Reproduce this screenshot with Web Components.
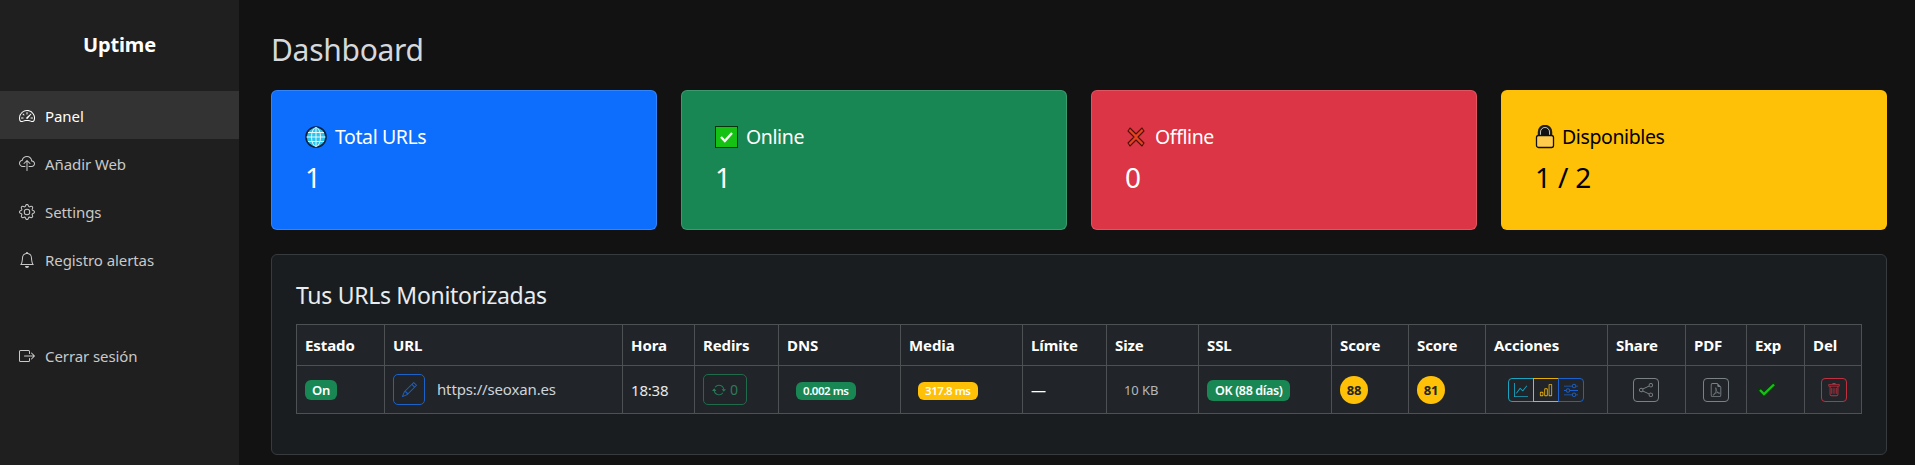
<!DOCTYPE html>
<html lang="es"><head><meta charset="utf-8"><title>Uptime</title>
<style>
html,body{margin:0;height:100%;background:#121212;overflow:hidden}
body{font-family:"Noto Sans","Liberation Sans",sans-serif;color:#fff}
</style></head><body>
<x-app></x-app>
<script>
const P={
speed:'<path d="M8 4a.5.5 0 0 1 .5.5V6a.5.5 0 0 1-1 0V4.5A.5.5 0 0 1 8 4zM3.732 5.732a.5.5 0 0 1 .707 0l.915.914a.5.5 0 1 1-.708.708l-.914-.915a.5.5 0 0 1 0-.707zM2 10a.5.5 0 0 1 .5-.5h1.586a.5.5 0 0 1 0 1H2.5A.5.5 0 0 1 2 10zm9.5 0a.5.5 0 0 1 .5-.5h1.5a.5.5 0 0 1 0 1H12a.5.5 0 0 1-.5-.5zm.754-4.246a.389.389 0 0 0-.527-.02L7.547 9.31a.91.91 0 1 0 1.302 1.258l3.434-4.297a.389.389 0 0 0-.029-.518z"/><path fill-rule="evenodd" d="M0 10a8 8 0 1 1 15.547 2.661c-.442 1.253-1.845 1.602-2.932 1.25C11.309 13.488 9.475 13 8 13c-1.474 0-3.31.488-4.615.911-1.087.352-2.49.003-2.932-1.25A7.988 7.988 0 0 1 0 10zm8-7a7 7 0 0 0-6.603 9.329c.203.575.923.876 1.68.63C4.397 12.533 6.358 12 8 12s3.604.532 4.923.96c.757.245 1.477-.056 1.68-.631A7 7 0 0 0 8 3z"/>',
cloud:'<path fill-rule="evenodd" d="M4.406 1.342A5.53 5.53 0 0 1 8 0c2.69 0 4.923 2 5.166 4.579C14.758 4.804 16 6.137 16 7.773 16 9.569 14.502 11 12.687 11H10a.5.5 0 0 1 0-1h2.688C13.979 10 15 8.988 15 7.773c0-1.216-1.02-2.228-2.313-2.228h-.5v-.5C12.188 2.825 10.328 1 8 1a4.53 4.53 0 0 0-2.941 1.1c-.757.652-1.153 1.438-1.153 2.055v.448l-.445.049C2.064 4.805 1 5.952 1 7.318 1 8.785 2.23 10 3.781 10H6a.5.5 0 0 1 0 1H3.781C1.708 11 0 9.366 0 7.318c0-1.763 1.266-3.223 2.942-3.593.143-.863.698-1.723 1.464-2.383z"/><path fill-rule="evenodd" d="M7.646 4.146a.5.5 0 0 1 .708 0l3 3a.5.5 0 0 1-.708.708L8.5 5.707V14.5a.5.5 0 0 1-1 0V5.707L5.354 7.854a.5.5 0 1 1-.708-.708l3-3z"/>',
gear:'<path d="M8 4.754a3.246 3.246 0 1 0 0 6.492 3.246 3.246 0 0 0 0-6.492zM5.754 8a2.246 2.246 0 1 1 4.492 0 2.246 2.246 0 0 1-4.492 0z"/><path d="M9.796 1.343c-.527-1.79-3.065-1.79-3.592 0l-.094.319a.873.873 0 0 1-1.255.52l-.292-.16c-1.64-.892-3.433.902-2.54 2.541l.159.292a.873.873 0 0 1-.52 1.255l-.319.094c-1.79.527-1.79 3.065 0 3.592l.319.094a.873.873 0 0 1 .52 1.255l-.16.292c-.892 1.64.901 3.434 2.541 2.54l.292-.159a.873.873 0 0 1 1.255.52l.094.319c.527 1.79 3.065 1.79 3.592 0l.094-.319a.873.873 0 0 1 1.255-.52l.292.16c1.64.893 3.434-.902 2.54-2.541l-.159-.292a.873.873 0 0 1 .52-1.255l.319-.094c1.79-.527 1.79-3.065 0-3.592l-.319-.094a.873.873 0 0 1-.52-1.255l.16-.292c.893-1.64-.902-3.433-2.541-2.54l-.292.159a.873.873 0 0 1-1.255-.52l-.094-.319zm-2.633.283c.246-.835 1.428-.835 1.674 0l.094.319a1.873 1.873 0 0 0 2.693 1.115l.291-.16c.764-.415 1.6.42 1.184 1.185l-.159.292a1.873 1.873 0 0 0 1.116 2.692l.318.094c.835.246.835 1.428 0 1.674l-.319.094a1.873 1.873 0 0 0-1.115 2.693l.16.291c.415.764-.42 1.6-1.185 1.184l-.291-.159a1.873 1.873 0 0 0-2.693 1.116l-.094.318c-.246.835-1.428.835-1.674 0l-.094-.319a1.873 1.873 0 0 0-2.692-1.115l-.292.16c-.764.415-1.6-.42-1.184-1.185l.159-.291A1.873 1.873 0 0 0 1.945 8.93l-.319-.094c-.835-.246-.835-1.428 0-1.674l.319-.094A1.873 1.873 0 0 0 3.06 4.377l-.16-.292c-.415-.764.42-1.6 1.185-1.184l.292.159a1.873 1.873 0 0 0 2.692-1.115l.094-.319z"/>',
bell:'<path d="M8 16a2 2 0 0 0 2-2H6a2 2 0 0 0 2 2zM8 1.918l-.797.161A4.002 4.002 0 0 0 4 6c0 .628-.134 2.197-.459 3.742-.16.767-.376 1.566-.663 2.258h10.244c-.287-.692-.502-1.49-.663-2.258C12.134 8.197 12 6.628 12 6a4.002 4.002 0 0 0-3.203-3.92L8 1.917zM14.22 12c.223.447.481.801.78 1H1c.299-.199.557-.553.78-1C2.68 10.2 3 6.88 3 6c0-2.42 1.72-4.44 4.005-4.901a1 1 0 1 1 1.99 0A5.002 5.002 0 0 1 13 6c0 .88.32 4.2 1.22 6z"/>',
logout:'<path fill-rule="evenodd" d="M10 12.5a.5.5 0 0 1-.5.5h-8a.5.5 0 0 1-.5-.5v-9a.5.5 0 0 1 .5-.5h8a.5.5 0 0 1 .5.5v2a.5.5 0 0 0 1 0v-2A1.5 1.5 0 0 0 9.5 2h-8A1.5 1.5 0 0 0 0 3.5v9A1.5 1.5 0 0 0 1.5 14h8a1.5 1.5 0 0 0 1.5-1.5v-2a.5.5 0 0 0-1 0v2z"/><path fill-rule="evenodd" d="M15.854 8.354a.5.5 0 0 0 0-.708l-3-3a.5.5 0 0 0-.708.708L14.293 7.5H5.5a.5.5 0 0 0 0 1h8.793l-2.147 2.146a.5.5 0 0 0 .708.708l3-3z"/>',
pencil:'<path d="M12.146.146a.5.5 0 0 1 .708 0l3 3a.5.5 0 0 1 0 .708l-10 10a.5.5 0 0 1-.168.11l-5 2a.5.5 0 0 1-.65-.65l2-5a.5.5 0 0 1 .11-.168l10-10zM11.207 2.5 13.5 4.793 14.793 3.5 12.5 1.207 11.207 2.5zm1.586 3L10.5 3.207 4 9.707V10h.5a.5.5 0 0 1 .5.5v.5h.5a.5.5 0 0 1 .5.5v.5h.293l6.5-6.5zm-9.761 5.175-.106.106-1.528 3.821 3.821-1.528.106-.106A.5.5 0 0 1 5 12.5V12h-.5a.5.5 0 0 1-.5-.5V11h-.5a.5.5 0 0 1-.468-.325z"/>',
repeat:'<path d="M11.534 7h3.932a.25.25 0 0 1 .192.41l-1.966 2.36a.25.25 0 0 1-.384 0l-1.966-2.36a.25.25 0 0 1 .192-.41zm-11 2h3.932a.25.25 0 0 0 .192-.41L2.692 6.23a.25.25 0 0 0-.384 0L.342 8.59A.25.25 0 0 0 .534 9z"/><path fill-rule="evenodd" d="M8 3c-1.552 0-2.94.707-3.857 1.818a.5.5 0 1 1-.771-.636A6.002 6.002 0 0 1 13.917 7H12.9A5.002 5.002 0 0 0 8 3zM3.1 9a5.002 5.002 0 0 0 8.757 2.182.5.5 0 1 1 .771.636A6.002 6.002 0 0 1 2.083 9H3.1z"/>',
graph:'<path fill-rule="evenodd" d="M0 0h1v15h15v1H0V0Zm14.817 3.113a.5.5 0 0 1 .07.704l-4.5 5.5a.5.5 0 0 1-.74.037L7.06 6.767l-3.656 5.027a.5.5 0 0 1-.808-.588l4-5.5a.5.5 0 0 1 .758-.06l2.609 2.61 4.15-5.073a.5.5 0 0 1 .704-.07Z"/>',
bars:'<path d="M4 11H2v3h2v-3zm5-4H7v7h2V7zm5-5v12h-2V2h2zm-2-1a1 1 0 0 0-1 1v12a1 1 0 0 0 1 1h2a1 1 0 0 0 1-1V2a1 1 0 0 0-1-1h-2zM6 7a1 1 0 0 1 1-1h2a1 1 0 0 1 1 1v7a1 1 0 0 1-1 1H7a1 1 0 0 1-1-1V7zm-5 4a1 1 0 0 1 1-1h2a1 1 0 0 1 1 1v3a1 1 0 0 1-1 1H2a1 1 0 0 1-1-1v-3z"/>',
sliders:'<path fill-rule="evenodd" d="M11.5 2a1.5 1.5 0 1 0 0 3 1.5 1.5 0 0 0 0-3zM9.05 3a2.5 2.5 0 0 1 4.9 0H16v1h-2.05a2.5 2.5 0 0 1-4.9 0H0V3h9.05zM4.5 7a1.5 1.5 0 1 0 0 3 1.5 1.5 0 0 0 0-3zM2.05 8a2.5 2.5 0 0 1 4.9 0H16v1H6.95a2.5 2.5 0 0 1-4.9 0H0V8h2.05zm9.45 4a1.5 1.5 0 1 0 0 3 1.5 1.5 0 0 0 0-3zm-2.45 1a2.5 2.5 0 0 1 4.9 0H16v1h-2.05a2.5 2.5 0 0 1-4.9 0H0v-1h9.05z"/>',
share:'<path d="M13.5 1a1.5 1.5 0 1 0 0 3 1.5 1.5 0 0 0 0-3zM11 2.5a2.5 2.5 0 1 1 .603 1.628l-6.718 3.12a2.499 2.499 0 0 1 0 1.504l6.718 3.12a2.5 2.5 0 1 1-.488.876l-6.718-3.12a2.5 2.5 0 1 1 0-3.256l6.718-3.12A2.5 2.5 0 0 1 11 2.5zm-8.5 4a1.5 1.5 0 1 0 0 3 1.5 1.5 0 0 0 0-3zm11 5.5a1.5 1.5 0 1 0 0 3 1.5 1.5 0 0 0 0-3z"/>',
pdf:'<path d="M14 14V4.5L9.5 0H4a2 2 0 0 0-2 2v12a2 2 0 0 0 2 2h8a2 2 0 0 0 2-2zM9.5 3A1.5 1.5 0 0 0 11 4.5h2V14a1 1 0 0 1-1 1H4a1 1 0 0 1-1-1V2a1 1 0 0 1 1-1h5.5v2z"/><path fill="none" stroke="currentColor" stroke-width=".8" d="M8 5.5c-.5 0-.6 1.600 1.900 5.500.8 1.100 2.300 1.500 2.400.6.100-.9-2.600-1-5 0-2 .8-3 2-2.400 2.500.7.500 3.900-4.700 3.100-8.100-.1-.4-.3-.5-.5-.5z"/>',
trash:'<path d="M5.500 5.500A.5.5 0 0 1 6 6v6a.5.5 0 0 1-1 0V6a.5.5 0 0 1 .5-.5zm2.500 0a.5.5 0 0 1 .5.5v6a.5.5 0 0 1-1 0V6a.5.5 0 0 1 .5-.5zm3 .5a.5.5 0 0 0-1 0v6a.5.5 0 0 0 1 0V6z"/><path fill-rule="evenodd" d="M14.500 3a1 1 0 0 1-1 1H13v9a2 2 0 0 1-2 2H5a2 2 0 0 1-2-2V4h-.5a1 1 0 0 1-1-1V2a1 1 0 0 1 1-1H6a1 1 0 0 1 1-1h2a1 1 0 0 1 1 1h3.500a1 1 0 0 1 1 1v1zM4.118 4 4 4.059V13a1 1 0 0 0 1 1h6a1 1 0 0 0 1-1V4.059L11.882 4H4.118zM2.500 3V2h11v1h-11z"/>'
};
function def(name,css,html,attrsFn){
  customElements.define(name,class extends HTMLElement{
    connectedCallback(){
      if(this.shadowRoot)return;
      const s=this.attachShadow({mode:'open'});
      s.innerHTML='<style>'+css+'</style>'+(attrsFn?attrsFn(this):html);
    }
  });
}
def('x-icon',':host{display:inline-flex;color:inherit;line-height:0}svg{display:block;fill:currentColor}','',e=>{
  const z=e.getAttribute('size')||16;
  return `<svg xmlns="http://www.w3.org/2000/svg" width="${z}" height="${z}" viewBox="0 0 16 16">${P[e.getAttribute('name')]}</svg>`;
});
def('x-nav-item',`:host{display:flex;align-items:center;gap:10px;height:48px;box-sizing:border-box;padding:1px 0 0 19px;color:#c9c9c9;font-size:15px;letter-spacing:-.08px}
:host([active]){background:#333;color:#fff}`,'<slot name="icon"></slot><span><slot></slot></span>');
def('x-sidebar',`:host{display:flex;flex-direction:column;width:239px;flex:none;height:100vh;background:#1f1f1f;box-sizing:border-box}
.brand{height:91px;display:flex;align-items:center;justify-content:center;padding-bottom:2px;box-sizing:border-box;font-size:20px;font-weight:700;color:#fff;letter-spacing:-.15px}
.gap{height:48px}`,`<div class="brand">Uptime</div>
<x-nav-item active><x-icon slot="icon" name="speed"></x-icon>Panel</x-nav-item>
<x-nav-item><x-icon slot="icon" name="cloud"></x-icon>Añadir Web</x-nav-item>
<x-nav-item><x-icon slot="icon" name="gear"></x-icon>Settings</x-nav-item>
<x-nav-item><x-icon slot="icon" name="bell"></x-icon>Registro alertas</x-nav-item>
<div class="gap"></div>
<x-nav-item><x-icon slot="icon" name="logout"></x-icon>Cerrar sesión</x-nav-item>`);
def('x-stat-card',`:host{display:block;height:140px;box-sizing:border-box;border-radius:6px;border:1px solid rgba(255,255,255,.16);padding:31px 33px;background:var(--bg);color:var(--fg,#fff)}
:host([dark]){border-color:transparent}
.t{display:flex;align-items:center;gap:8px;font-size:19.500px;line-height:30px;height:30px;letter-spacing:-.4px}
.v{font-size:28px;line-height:42px;margin-top:4px;letter-spacing:-.2px}`,
`<div class="t"><slot name="icon"></slot><slot name="title"></slot></div><div class="v"><slot></slot></div>`);
def('x-badge',`:host{display:inline-flex;align-items:center;justify-content:center;height:var(--h,20px);padding:0 var(--px,8px);border-radius:6px;background:var(--bg,#198754);color:#fff;font-weight:600;font-size:var(--fs,12px);letter-spacing:var(--ls,-.4px);white-space:nowrap}`,'<slot></slot>');
def('x-btn',`:host{display:inline-flex;align-items:center;justify-content:center;gap:4px;box-sizing:border-box;width:var(--w,26px);height:var(--h,24px);border:1px solid var(--c);border-radius:var(--r,4px);color:var(--c);font-size:14px}`,'<slot></slot>');
def('x-score',`:host{display:inline-flex;align-items:center;justify-content:center;width:28px;height:28px;border-radius:50%;background:#ffc107;color:#212529;font-weight:700;font-size:13px;letter-spacing:-.3px}`,'<slot></slot>');
def('x-url-table',`:host{display:block}
table{border-collapse:collapse;table-layout:fixed;width:1565px;background:#212529;color:#fff}
th,td{border:1px solid #4d5154;padding:0 0 0 8px;text-align:left;white-space:nowrap;overflow:hidden}
th{height:40px;font-size:15px;font-weight:700;letter-spacing:-.1px}
td{height:47px;font-size:15px}
.url{display:flex;align-items:center;gap:12px;color:#ced4da;font-size:15px;letter-spacing:-.15px}
.url span{margin-top:-2px}
.group{display:inline-flex;margin-left:14px;vertical-align:middle}
.group x-btn{--w:26px}
.group x-btn+x-btn{margin-left:-1px}
x-btn{vertical-align:middle}
.g1{--c:#1ba3bf;--r:4px 0 0 4px}
.g2{--c:#e6ae0b;--r:0}
.g3{--c:#1a62cf;--r:0 4px 4px 0}`,
`<table><colgroup>${[88,238,72,84,122,122,84,92,133,77,77,122,78,61,58,57].map(w=>`<col style="width:${w}px">`).join('')}</colgroup>
<thead><tr>${['Estado','URL','Hora','Redirs','DNS','Media','Límite','Size','SSL','Score','Score','Acciones','Share','PDF','Exp','Del'].map(t=>`<th>${t}</th>`).join('')}</tr></thead>
<tbody><tr>
<td><x-badge style="--px:7px;--fs:13px;--ls:-.2px">On</x-badge></td>
<td><div class="url"><x-btn style="--c:#1b62c9;--w:32px;--h:31px;--r:5px"><x-icon name="pencil" size="15"></x-icon></x-btn><span>https://seoxan.es</span></div></td>
<td style="color:#e9e9e9;padding-left:8px;letter-spacing:-.2px">18:38</td>
<td><x-btn style="--c:#1f6b4a;--w:44px;--h:31px;--r:5px"><x-icon name="repeat" size="14" style="color:#24805a"></x-icon><span style="color:#2f7a58">0</span></x-btn></td>
<td><x-badge style="margin-left:9px;--h:18px;--px:7px;--fs:11.500px;--ls:-.45px">0.002 ms</x-badge></td>
<td><x-badge style="margin-left:9px;--h:18px;--px:7px;--bg:#ffc107;--fs:11.500px;--ls:-.45px">317.8 ms</x-badge></td>
<td>—</td>
<td style="color:#b5b8bb;font-size:13px;padding-left:17px;letter-spacing:-.1px">10 KB</td>
<td><x-badge style="--fs:12.500px;--ls:-.35px;--h:21px">OK (88 días)</x-badge></td>
<td><x-score>88</x-score></td>
<td><x-score>81</x-score></td>
<td><div class="group"><x-btn class="g1"><x-icon name="graph" size="14"></x-icon></x-btn><x-btn class="g2"><x-icon name="bars" size="14"></x-icon></x-btn><x-btn class="g3"><x-icon name="sliders" size="14"></x-icon></x-btn></div></td>
<td style="padding-left:25px"><x-btn style="--c:#7a8288"><x-icon name="share" size="14"></x-icon></x-btn></td>
<td style="padding-left:17px"><x-btn style="--c:#7a8288"><x-icon name="pdf" size="14"></x-icon></x-btn></td>
<td style="padding-left:11px"><svg width="18" height="15" viewBox="0 0 18 15" style="display:block"><path d="M1.500 8 L6 12.500 L16.500 2" fill="none" stroke="#0a3a0a" stroke-width="4" stroke-linecap="square"/><path d="M2 8 L6 12 L16 2.500" fill="none" stroke="#16c016" stroke-width="2.400"/></svg></td>
<td style="padding-left:16px"><x-btn style="--c:#c0303f"><x-icon name="trash" size="14"></x-icon></x-btn></td>
</tr></tbody></table>`);
def('x-panel',`:host{display:block;margin-top:24px;height:201px;box-sizing:border-box;border:1px solid #373b3e;border-radius:6px;background:#1a1d20;padding:23px 24px 0}
h2{margin:0 0 12px;font-size:23px;font-weight:400;line-height:34px;color:#e9ecef;letter-spacing:-.3px}`,
`<h2><slot name="title"></slot></h2><slot></slot>`);
def('x-app',`:host{display:flex;height:100vh;overflow:hidden}
main{flex:1;min-width:0;box-sizing:border-box;padding:24px 28px 0 32px;background:#121212}
h1{margin:0 0 16px;height:50px;font-size:30px;line-height:52px;font-weight:400;color:#d5d9dd;letter-spacing:-.28px}
.cards{display:grid;grid-template-columns:repeat(4,386px);gap:24px}
svg{display:block}`,
`<x-sidebar></x-sidebar><main><h1>Dashboard</h1>
<div class="cards">
<x-stat-card style="--bg:#0d6efd"><svg slot="icon" width="22" height="22" viewBox="0 0 22 22"><circle cx="11" cy="11" r="10" fill="#28c4ee" stroke="#06203c" stroke-width="1.600"/><g fill="none" stroke="#e4f7fd" stroke-width="1"><ellipse cx="11" cy="11" rx="4.500" ry="9.500"/><path d="M11 1.500v19M1.500 11h19M3 6.500h16M3 15.500h16"/></g></svg><span slot="title">Total URLs</span>1</x-stat-card>
<x-stat-card style="--bg:#198754"><svg slot="icon" width="23" height="22" viewBox="0 0 23 22"><rect x=".5" y=".5" width="22" height="21" fill="#15c213" stroke="#08330e"/><path d="M6 11l3.800 4 7.200-8" fill="none" stroke="#fff" stroke-width="2.400"/></svg><span slot="title">Online</span>1</x-stat-card>
<x-stat-card style="--bg:#dc3545"><svg slot="icon" width="22" height="22" viewBox="0 0 22 22"><path d="M3 5l2-3 6 6 6-6 2 3-6 6 6 6-2 3-6-6-6 6-2-3 6-6z" fill="#e8431f" stroke="#50100c" stroke-width="1.100" stroke-linejoin="round"/></svg><span slot="title">Offline</span>0</x-stat-card>
<x-stat-card dark style="--bg:#ffc107;--fg:#000"><svg slot="icon" width="20" height="24" viewBox="0 0 20 24" style="margin-right:-1px"><path d="M4 11V7a6 6 0 0 1 12 0v4" fill="none" stroke="#222" stroke-width="2.500"/><path d="M5.500 11V7a4.500 4.500 0 0 1 9 0v4" fill="#111" stroke="#bbb" stroke-width="1"/><rect x="1.500" y="10.500" width="17" height="12" rx="2" fill="#ffcb4d" stroke="#111" stroke-width="1.300"/></svg><span slot="title">Disponibles</span>1 / 2</x-stat-card>
</div>
<x-panel><span slot="title">Tus URLs Monitorizadas</span><x-url-table></x-url-table></x-panel>
</main>`);
</script>
</body></html>
